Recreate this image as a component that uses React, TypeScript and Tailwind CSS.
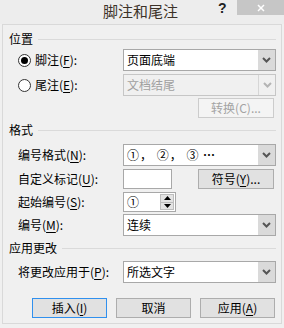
import React from "react";

function U({ children }: { children: React.ReactNode }) {
  return <span className="underline underline-offset-[2px] decoration-1">{children}</span>;
}

function Chevron({ color }: { color: string }) {
  return (
    <svg width="9" height="6" viewBox="0 0 9 6">
      <polyline points="1,1 4.5,4.5 8,1" fill="none" stroke={color} strokeWidth="2" />
    </svg>
  );
}

function Select({ text, disabled }: { text: React.ReactNode; disabled?: boolean }) {
  return (
    <div
      className={
        "w-[153px] h-[22px] border flex items-stretch " +
        (disabled ? "border-[#c6c6c6] bg-[#f0f0f0] text-[#a0a0a0]" : "border-[#a8a8a8] bg-white text-black")
      }
    >
      <div className="flex-1 pl-[3px] flex items-center text-[12px] leading-[16px] whitespace-nowrap">{text}</div>
      {disabled ? (
        <div className="w-[17px] border-l border-[#d6d6d6] flex items-center justify-center">
          <Chevron color="#b4b4b4" />
        </div>
      ) : (
        <div className="w-[17px] bg-[#dadada] flex items-center justify-center">
          <Chevron color="#555555" />
        </div>
      )}
    </div>
  );
}

function Radio({ checked }: { checked?: boolean }) {
  return (
    <div className="w-[13px] h-[13px] rounded-full border border-[#333333] bg-white flex items-center justify-center shrink-0">
      {checked && <div className="w-[7px] h-[7px] rounded-full bg-black" />}
    </div>
  );
}

function Header({ children }: { children: React.ReactNode }) {
  return (
    <div className="flex items-center h-[16px] pl-[6px] pr-[5px]">
      <span className="text-[12px] leading-[16px]">{children}</span>
      <div className="flex-1 ml-[5px] h-px bg-[#dadada]" />
    </div>
  );
}

function Btn({
  children,
  w,
  variant,
}: {
  children: React.ReactNode;
  w: string;
  variant?: "default" | "disabled";
}) {
  const cls =
    variant === "default"
      ? "border-[#3090ee] bg-[#e1e1e1] text-black"
      : variant === "disabled"
      ? "border-[#cccccc] bg-[#f4f4f4] text-[#a3a3a3]"
      : "border-[#adadad] bg-[#e1e1e1] text-black";
  return (
    <div className={"h-[20px] border flex items-center justify-center text-[12px] leading-[16px] " + w + " " + cls}>
      {children}
    </div>
  );
}

export default function App() {
  return (
    <div className="relative w-[284px] h-[328px] bg-[#f0f0f0] font-['Noto_Sans_CJK_SC',sans-serif] text-black overflow-hidden">
      {/* title bar */}
      <div className="flex h-[24px] bg-[#ededed]">
        <div className="ml-[103px] mt-[2px] text-[15px] leading-[18px] text-[#3c3228]">脚注和尾注</div>
        <div className="ml-[40px] mt-[0px] text-[14px] leading-[16px] font-bold text-[#222222] font-['Liberation_Sans',sans-serif]">?</div>
        <div className="ml-auto w-[47px] h-[15px] bg-[#c6c6c6] flex items-center justify-center">
          <svg width="8" height="8" viewBox="0 0 8 8">
            <line x1="1" y1="1" x2="7" y2="7" stroke="white" strokeWidth="1.5" />
            <line x1="7" y1="1" x2="1" y2="7" stroke="white" strokeWidth="1.5" />
          </svg>
        </div>
      </div>

      {/* client */}
      <div className="ml-[2px] w-[280px] h-[300px] border border-[#d9d9d9] bg-[#f0f0f0] flex flex-col">
        <div className="mt-[6px]">
          <Header>位置</Header>
        </div>

        <div className="mt-[2px] flex items-center h-[22px] pl-[15px] pr-[5px]">
          <Radio checked />
          <div className="ml-[4px] flex-1 text-[12px] leading-[16px]">
            脚注(<U>F</U>):
          </div>
          <Select text="页面底端" />
        </div>

        <div className="mt-[3px] flex items-center h-[22px] pl-[15px] pr-[5px]">
          <Radio />
          <div className="ml-[4px] flex-1 text-[12px] leading-[16px]">
            尾注(<U>E</U>):
          </div>
          <Select text="文档结尾" disabled />
        </div>

        <div className="mt-[2px] flex justify-end pr-[7px]">
          <Btn w="w-[76px]" variant="disabled">
            转换(C)...
          </Btn>
        </div>

        <div className="mt-[4px]">
          <Header>格式</Header>
        </div>

        <div className="mt-[6px] flex items-center h-[22px] pl-[15px] pr-[5px]">
          <div className="flex-1 text-[12px] leading-[16px]">
            编号格式(<U>N</U>):
          </div>
          <Select
            text={
              <span>
                <span className="tracking-[1px]">①， ②， ③ </span>
                <span className="font-bold">…</span>
              </span>
            }
          />
        </div>

        <div className="mt-[3px] flex items-center h-[20px] pl-[15px] pr-[7px]">
          <div className="w-[105px] text-[12px] leading-[16px]">
            自定义标记(<U>U</U>):
          </div>
          <div className="w-[49px] h-[20px] border border-[#a8a8a8] bg-white" />
          <div className="flex-1" />
          <Btn w="w-[76px]">
            符号(<U>Y</U>)...
          </Btn>
        </div>

        <div className="mt-[3px] flex items-center h-[20px] pl-[15px] pr-[7px]">
          <div className="w-[105px] text-[12px] leading-[16px]">
            起始编号(<U>S</U>):
          </div>
          <div className="w-[53px] h-[20px] border border-[#a8a8a8] bg-white flex items-stretch">
            <div className="flex-1 pl-[3px] flex items-center text-[12px] leading-[16px]">①</div>
            <div className="w-[14px] my-[1px] mr-[1px] flex flex-col">
              <div className="flex-1 bg-[#e3e3e3] border border-[#bdbdbd] flex items-center justify-center">
                <svg width="7" height="4" viewBox="0 0 7 4">
                  <polygon points="0,4 3.5,0 7,4" fill="#000" />
                </svg>
              </div>
              <div className="flex-1 bg-[#e3e3e3] border border-t-0 border-[#bdbdbd] flex items-center justify-center">
                <svg width="7" height="4" viewBox="0 0 7 4">
                  <polygon points="0,0 3.5,4 7,0" fill="#000" />
                </svg>
              </div>
            </div>
          </div>
        </div>

        <div className="mt-[2px] flex items-center h-[22px] pl-[15px] pr-[5px]">
          <div className="flex-1 text-[12px] leading-[16px]">
            编号(<U>M</U>):
          </div>
          <Select text="连续" />
        </div>

        <div className="mt-[4px]">
          <Header>应用更改</Header>
        </div>

        <div className="mt-[5px] flex items-center h-[22px] pl-[15px] pr-[5px]">
          <div className="flex-1 text-[12px] leading-[16px]">
            将更改应用于(<U>P</U>):
          </div>
          <Select text="所选文字" />
        </div>

        <div className="mt-[15px] flex justify-end gap-[9px] pr-[6px]">
          <Btn w="w-[75px]" variant="default">
            插入(<U>I</U>)
          </Btn>
          <Btn w="w-[75px]">取消</Btn>
          <Btn w="w-[75px]">
            应用(<U>A</U>)
          </Btn>
        </div>
      </div>
    </div>
  );
}
